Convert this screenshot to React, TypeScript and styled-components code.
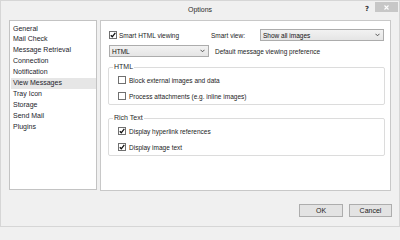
import React from "react";
import styled, { createGlobalStyle } from "styled-components";

const GlobalStyle = createGlobalStyle`
  html, body {
    margin: 0;
    padding: 0;
    background: #f0f0f0;
  }
  * {
    box-sizing: border-box;
  }
`;

const Window = styled.div`
  width: 400px;
  height: 227px;
  display: flex;
  flex-direction: column;
  background: #f0f0f0;
  border: 1px solid #d6d6d6;
  font-family: "Liberation Sans", Arial, sans-serif;
  font-size: 6.5px;
  color: #1b1b1b;
`;

const TitleBar = styled.div`
  height: 19px;
  display: grid;
  grid-template-columns: 1fr auto 1fr;
  align-items: start;
`;

const Title = styled.div`
  grid-column: 2;
  font-size: 7px;
  line-height: 9px;
  padding-top: 4px;
  color: #2b2b2b;
`;

const TitleButtons = styled.div`
  grid-column: 3;
  justify-self: end;
  display: flex;
  align-items: flex-start;
  padding-top: 1px;
  padding-right: 1px;
`;

const HelpGlyph = styled.span`
  font-family: "DejaVu Sans", sans-serif;
  font-weight: bold;
  font-size: 7px;
  line-height: 10px;
  padding-top: 2px;
  margin-right: 6px;
  color: #333;
`;

const CloseButton = styled.div`
  width: 23px;
  height: 10px;
  background: #c7c7c7;
  display: flex;
  align-items: center;
  justify-content: center;
`;

const Body = styled.div`
  display: flex;
  gap: 3px;
  padding: 0 8px 0 8px;
  height: 171px;
`;

const ListBox = styled.div`
  width: 88px;
  height: 170px;
  background: #fff;
  border: 1px solid #c3c3c3;
  padding: 2.5px 0 0 1px;
`;

const ListItem = styled.div<{ $selected?: boolean }>`
  height: 10.9px;
  line-height: 10.9px;
  padding-left: 2px;
  font-size: 7px;
  color: #1c1c2c;
  background: ${(p) => (p.$selected ? "#e6e6e6" : "transparent")};
`;

const Panel = styled.div`
  flex: 1;
  background: #fff;
  border: 1px solid #c8c8c8;
  padding: 8px 5px 0 8px;
  display: flex;
  flex-direction: column;
`;

const Row = styled.div`
  display: flex;
  align-items: center;
  height: 12px;
`;

const TopRow = styled(Row)`
  margin-bottom: 4px;
`;

const LeftCell = styled.div`
  width: 102px;
  display: flex;
  align-items: center;
`;

const FieldLabel = styled.span`
  width: 49px;
`;

const Select = styled.div<{ $width: number }>`
  width: ${(p) => p.$width}px;
  height: 12px;
  border: 1px solid #acacac;
  background: linear-gradient(#f2f2f2, #e5e5e5);
  display: flex;
  align-items: center;
  justify-content: space-between;
  padding: 0 3px 0 2px;
  color: #111;
`;

const Hint = styled.span`
  margin-left: 6px;
`;

const CheckRow = styled.label`
  display: flex;
  align-items: center;
  height: 12px;
  gap: 2px;
`;

const Box = styled.span`
  width: 8px;
  height: 8px;
  border: 1px solid #707070;
  background: #fff;
  display: flex;
  align-items: center;
  justify-content: center;
`;

const Group = styled.fieldset<{ $top: number }>`
  margin: ${(p) => p.$top}px 0 0 -1px;
  padding: 3px 9px 2px 9px;
  border: 1px solid #dcdcdc;
  border-radius: 2px;
  display: flex;
  flex-direction: column;
  gap: 4px;
`;

const Legend = styled.legend`
  margin-left: -5px;
  padding: 0 1px;
  line-height: 8px;
  font-size: 7px;
  color: #2a2a2a;
`;

const GroupLabel = styled.span`
  margin-left: 1px;
`;

const Footer = styled.div`
  display: flex;
  justify-content: flex-end;
  gap: 6px;
  padding: 13px 7px 0 0;
`;

const Button = styled.div<{ $width: number }>`
  width: ${(p) => p.$width}px;
  height: 13px;
  border: 1px solid #adadad;
  background: #e3e3e3;
  display: flex;
  align-items: center;
  justify-content: center;
  font-size: 7px;
  color: #222;
`;

const Chevron = () => (
  <svg width="5" height="4" viewBox="0 0 5 4">
    <path d="M0.5 0.8 L2.5 2.8 L4.5 0.8" fill="none" stroke="#444" strokeWidth="0.9" />
  </svg>
);

const Check = ({ on }: { on?: boolean }) => (
  <Box>
    {on && (
      <svg width="6" height="6" viewBox="0 0 6 6">
        <path d="M0.8 3.2 L2.3 4.8 L5.3 0.8" fill="none" stroke="#111" strokeWidth="1.3" />
      </svg>
    )}
  </Box>
);

const pages = [
  "General",
  "Mail Check",
  "Message Retrieval",
  "Connection",
  "Notification",
  "View Messages",
  "Tray Icon",
  "Storage",
  "Send Mail",
  "Plugins",
];

export default function App() {
  return (
    <>
      <GlobalStyle />
      <Window>
        <TitleBar>
          <Title>Options</Title>
          <TitleButtons>
            <HelpGlyph>?</HelpGlyph>
            <CloseButton>
              <svg width="5" height="5" viewBox="0 0 5 5">
                <path d="M0.5 0.5 L4.5 4.5 M4.5 0.5 L0.5 4.5" stroke="#fff" strokeWidth="1.1" />
              </svg>
            </CloseButton>
          </TitleButtons>
        </TitleBar>
        <Body>
          <ListBox>
            {pages.map((p) => (
              <ListItem key={p} $selected={p === "View Messages"}>
                {p}
              </ListItem>
            ))}
          </ListBox>
          <Panel>
            <TopRow>
              <LeftCell>
                <CheckRow>
                  <Check on />
                  <span>Smart HTML viewing</span>
                </CheckRow>
              </LeftCell>
              <FieldLabel>Smart view:</FieldLabel>
              <Select $width={124}>
                <span>Show all images</span>
                <Chevron />
              </Select>
            </TopRow>
            <Row>
              <Select $width={100}>
                <span>HTML</span>
                <Chevron />
              </Select>
              <Hint>Default message viewing preference</Hint>
            </Row>
            <Group $top={6}>
              <Legend>HTML</Legend>
              <CheckRow>
                <Check />
                <GroupLabel>Block external images and data</GroupLabel>
              </CheckRow>
              <CheckRow>
                <Check />
                <GroupLabel>Process attachments (e.g. inline images)</GroupLabel>
              </CheckRow>
            </Group>
            <Group $top={9}>
              <Legend>Rich Text</Legend>
              <CheckRow>
                <Check on />
                <GroupLabel>Display hyperlink references</GroupLabel>
              </CheckRow>
              <CheckRow>
                <Check on />
                <GroupLabel>Display image text</GroupLabel>
              </CheckRow>
            </Group>
          </Panel>
        </Body>
        <Footer>
          <Button $width={44}>OK</Button>
          <Button $width={43}>Cancel</Button>
        </Footer>
      </Window>
    </>
  );
}
